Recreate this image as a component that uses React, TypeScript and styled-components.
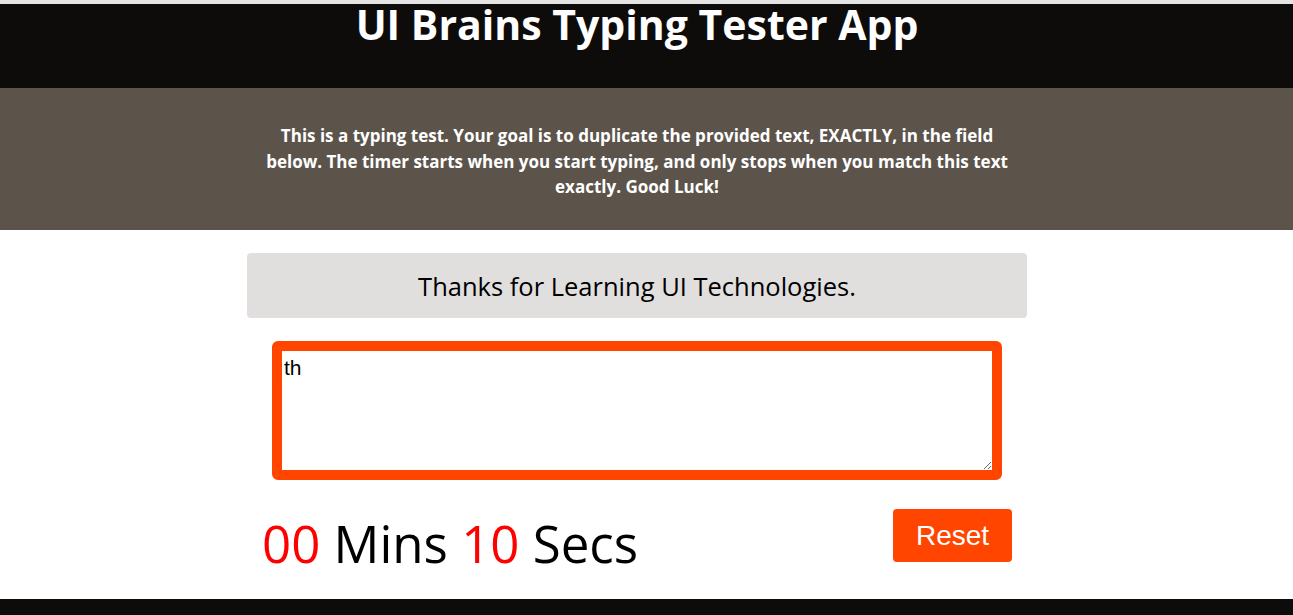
import styled, { createGlobalStyle } from "styled-components";

const GlobalStyle = createGlobalStyle`
  html, body {
    margin: 0;
    padding: 0;
    background: #ffffff;
  }
  body {
    font-family: "Comic Sans MS", "Open Sans", sans-serif;
  }
`;

const Page = styled.div`
  min-height: 615px;
  box-sizing: border-box;
  display: flex;
  flex-direction: column;
  border-top: 4px solid #e4e4e4;
`;

const Header = styled.header`
  height: 84px;
  background: #0e0c0a;
  padding-right: 19px;
  display: flex;
  justify-content: center;
`;

const Title = styled.h1`
  margin: 0;
  font-size: 41px;
  line-height: 40px;
  font-weight: 700;
  color: #ffffff;
`;

const Intro = styled.section`
  height: 142px;
  box-sizing: border-box;
  padding: 5px 19px 0 0;
  background: #5c544b;
  display: flex;
  justify-content: center;
  align-items: center;
`;

const IntroText = styled.p`
  margin: 0;
  max-width: 760px;
  text-align: center;
  font-size: 17px;
  line-height: 25.5px;
  font-weight: 700;
  color: #ffffff;
`;

const Main = styled.main`
  flex: 1;
  padding: 23px 19px 25px 0;
  display: flex;
  flex-direction: column;
  align-items: center;
`;

const Prompt = styled.div`
  width: 780px;
  height: 65px;
  box-sizing: border-box;
  background: #e0dfde;
  border-radius: 4px;
  display: flex;
  align-items: center;
  justify-content: center;
  font-size: 25.5px;
  color: #000000;
`;

const Input = styled.textarea`
  margin-top: 23px;
  width: 730px;
  height: 139px;
  box-sizing: border-box;
  border: 10px solid #ff4500;
  border-radius: 6px;
  padding: 5px 2px 2px;
  font-family: "Liberation Sans", Arial, sans-serif;
  font-size: 21px;
  color: #000000;
  outline: none;
  resize: both;
`;

const Controls = styled.div`
  margin-top: 29px;
  width: 750px;
  display: flex;
  justify-content: space-between;
  align-items: flex-start;
`;

const Timer = styled.div`
  font-size: 51px;
  line-height: 1;
  padding-top: 9px;
  color: #000000;
`;

const Digits = styled.span`
  color: #ff0000;
`;

const ResetButton = styled.button`
  width: 119px;
  height: 53px;
  border: none;
  border-radius: 4px;
  background: #ff4500;
  color: #ffffff;
  font-family: "Liberation Sans", Arial, sans-serif;
  font-size: 28px;
  cursor: pointer;
`;

const Footer = styled.footer`
  height: 16px;
  background: #0e0c0a;
`;

export default function App() {
  return (
    <>
      <GlobalStyle />
      <Page>
        <Header>
          <Title>UI Brains Typing Tester App</Title>
        </Header>
        <Intro>
          <IntroText>
            This is a typing test. Your goal is to duplicate the provided text, EXACTLY, in the field
            below. The timer starts when you start typing, and only stops when you match this text
            exactly. Good Luck!
          </IntroText>
        </Intro>
        <Main>
          <Prompt>Thanks for Learning UI Technologies.</Prompt>
          <Input defaultValue="th" spellCheck={false} />
          <Controls>
            <Timer>
              <Digits>00</Digits> Mins <Digits>10</Digits> Secs
            </Timer>
            <ResetButton>Reset</ResetButton>
          </Controls>
        </Main>
        <Footer />
      </Page>
    </>
  );
}
